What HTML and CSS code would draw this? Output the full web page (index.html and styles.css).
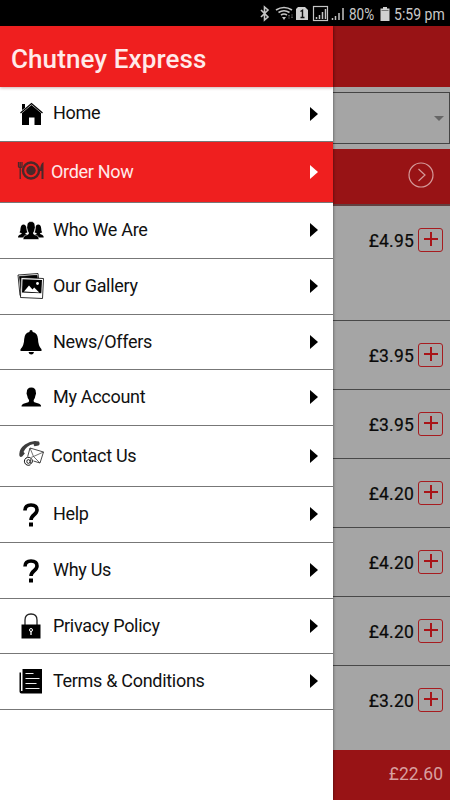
FILE: index.html
```html
<!DOCTYPE html>
<html lang="en">
<head>
<meta charset="utf-8">
<title>Chutney Express</title>
<link rel="stylesheet" href="styles.css">
</head>
<body>
<div class="statusbar">
  <svg class="status-icons" width="96" height="26" viewBox="0 0 96 26" fill="none" stroke="#c4c4c4">
    <path d="M2 10l7 7-3.500 3V7L9 10l-7 7" stroke-width="1.600"/>
    <path d="M17 10q8-5 16 0M19.500 12.500q5.500-3.500 11 0M22 15q3-2 6 0" stroke-width="1.700"/>
    <path d="M23 17h4l-2 3z" fill="#c4c4c4" stroke="none"/>
    <path d="M30 19v-4m-1 1l1-1 1 1M33 14v4m-1-1l1 1 1-1" stroke="#555" stroke-width=".8"/>
    <path d="M39 7h7l3 3v10H37V9z" fill="#d0d0d0" stroke="none"/>
    <path d="M41.500 11.500l2-1.300V17.500M41.500 17.500h4" stroke="#111" stroke-width="1.400"/>
    <rect x="54.500" y="6.500" width="14" height="14" stroke-width="1.200"/>
    <path d="M57.500 19v-2M60.500 19v-4M63.500 19v-7M66.500 19V9" stroke-width="1.500"/>
    <path d="M73.500 20v-2M76.500 20v-4M80 20v-7M84 20V8" stroke-width="1.500"/>
  </svg>
  <span class="battery-level">80%</span>
  <svg class="battery" width="10" height="14" viewBox="0 0 10 14"><path d="M3 0h4v1.500h2.500V14H.5V1.500H3z" fill="#d0d0d0"/><path d="M1.500 3.500h7" stroke="#777"/></svg>
  <span class="clock">5:59 pm</span>
</div>
<div class="screen">
  <nav class="drawer">
    <h1 class="drawer-title">Chutney Express</h1>
    <ul class="menu">
      <li class="item first"><svg class="icon" viewBox="0 0 28 28"><path d="M5 4h3v4l-3 2z"/><path d="M3.500 13L14.500 3.500 25.500 13" fill="none" stroke="#000" stroke-width="1.300"/><path d="M5 13l9.500-8 9.500 8v12h-6.500v-7.500h-5.500V25H5z"/></svg><span>Home</span><i class="arrow"></i></li>
      <li class="item active wide"><svg class="icon" viewBox="0 0 28 28"><g fill="#49282a" stroke="#49282a"><circle cx="14" cy="12.500" r="8" fill="none" stroke-width="2.400"/><circle cx="14" cy="12.500" r="4.700" stroke="none"/><path d="M1.500 4v4.500q0 1 1.700 1T5 8.500V4M3.200 4v17" fill="none" stroke-width="1.300"/><path d="M26.500 4q-3.500 2-3.500 9h1.500v8h2z" stroke="none"/></g></svg><span>Order Now</span><i class="arrow"></i></li>
      <li class="item"><svg class="icon" viewBox="0 0 28 28"><path d="M1 21.500q0-2.500 3-3.200 1-.3.500-1.200-1.500 0-2-.8 1-1 1-3.800Q4 8.500 6.500 8.500T9.500 12.500q0 2.800 1 3.800-.5.800-2 .8-.5.900.5 1.200 3 .7 3 3.200z"/><path d="M16 21.500q0-2.500 3-3.200 1-.3.500-1.200-1.500 0-2-.8 1-1 1-3.800 0-4 2.700-4t3 4q0 2.800 1 3.800-.5.800-2 .8-.5.900.5 1.200 3 .7 3 3.200z"/><path d="M6 23.500q0-4 4.300-4.800 1.700-.3 1.200-2.200-1-1-1.200-3-1-2.500-.3-3.500 0-4.500 4-4.500t4 4.500q.7 1-.3 3.500-.2 2-1.200 3-.5 1.900 1.200 2.200 4.300.8 4.300 4.800z" stroke="#fff" stroke-width=".6"/></svg><span>Who We Are</span><i class="arrow"></i></li>
      <li class="item"><svg class="icon" viewBox="0 0 28 28"><g fill="#fff" stroke="#000" stroke-width=".8"><path d="M1 3l20-1.500 2 20-20 2z"/><path d="M2.500 4.500l17.500-1.200 1 12-17 1.500z" fill="#000"/><path d="M4 5.500l22.500 1-1 20-22-1z"/></g><path d="M5.500 7.200l19.500.8-.7 13.200L5 20.500z"/><path d="M7 19.500l5-6 3.500 4 1.700-2 5 5z" fill="#fff"/><circle cx="20.500" cy="11.500" r="1.400" fill="#fff"/></svg><span>Our Gallery</span><i class="arrow"></i></li>
      <li class="item short"><svg class="icon" viewBox="0 0 28 28"><path d="M14 2q1.700 0 1.700 1.900 5 1 5.300 7.100.2 7 3.500 10.300V23H3.500v-1.700Q7 18 7.200 11q.3-6.100 5.200-7.100Q12.400 2 14 2zM11.500 24h5.500q-.5 2.500-2.700 2.500T11.500 24z"/></svg><span>News/Offers</span><i class="arrow"></i></li>
      <li class="item"><svg class="icon" viewBox="0 0 28 28"><path d="M4.500 23.500q0-2.600 3.500-3.300l3.300-1q1.200-.6.700-2.200-1.500-1.700-1.700-4-1.300-3-.5-4Q9.800 4.500 14.300 4.500t4.500 4.500q.8 1-.5 4-.2 2.300-1.600 4-.5 1.600.7 2.200l3.300 1q3.400.7 3.400 3.300z"/></svg><span>My Account</span><i class="arrow"></i></li>
      <li class="item wide"><svg class="icon contact" viewBox="0 0 28 28"><path d="M2.500 16Q1.200 9.500 8 4.500T22 1.500q1.500 3-.5 4l-4 .8q-1-1-.8-2.300-3.700.7-6.500 3t-3.700 5q1 .7 1.300 1.600l-2.600 3q-1.700 1-2.700-.6z" fill="#3d3d3d"/><g fill="#fff" stroke="#333"><path d="M13 8l13.500 4L23 23l-13-4z" stroke-width=".9"/><path d="M13 8l3.500 8.500L26.500 12M10 19l6.500-2.500L23 23" fill="none" stroke-width=".7"/><circle cx="11.500" cy="21.500" r="4.500" stroke="#fff"/><path d="M13.500 24.700A4 4 0 1 1 15.400 21q0 2.400-1.400 2.400t-1-1.700l.4-2.300" fill="none" stroke="#111" stroke-width="1"/><ellipse cx="11.400" cy="21.500" rx="1.600" ry="1.900" stroke="#111" stroke-width=".9"/></g></svg><span>Contact Us</span><i class="arrow"></i></li>
      <li class="item"><svg class="icon" viewBox="0 0 28 28"><path d="M8 10.500Q8 5 14 5t6 5c0 5-6 4.500-6 10" fill="none" stroke="#000" stroke-width="3.600"/><path d="M12 22.500h4v4h-4z"/></svg><span>Help</span><i class="arrow"></i></li>
      <li class="item"><svg class="icon" viewBox="0 0 28 28"><path d="M8 10.500Q8 5 14 5t6 5c0 5-6 4.500-6 10" fill="none" stroke="#000" stroke-width="3.600"/><path d="M12 22.500h4v4h-4z"/></svg><span>Why Us</span><i class="arrow"></i></li>
      <li class="item short"><svg class="icon" viewBox="0 0 28 28"><path d="M8 13V8q0-6 6-6t6 6v5" fill="none" stroke="#222" stroke-width="1.300"/><path d="M4.500 12.500h19v14h-19z"/><path d="M14 19v4" stroke="#fff" stroke-width="1.300"/><circle cx="14" cy="18" r="1.500" fill="none" stroke="#fff"/></svg><span>Privacy Policy</span><i class="arrow"></i></li>
      <li class="item"><svg class="icon" viewBox="0 0 28 28"><path d="M5.500 2H25v24.500H4.500q-2 0-2-2V5.500H4V24h1.500z"/><path d="M8.500 6.500h8M8.500 11.500h14M8.500 16.500h11M8.500 21.500h14" stroke="#eee" stroke-width="1.200"/></svg><span>Terms &amp; Conditions</span><i class="arrow"></i></li>
    </ul>
  </nav>
  <main class="page">
    <div class="appbar"></div>
    <div class="filter"><div class="select"><i class="caret"></i></div></div>
    <div class="category"><svg width="26" height="26" viewBox="0 0 26 26" fill="none" stroke="#d59a9a" stroke-width="1.200"><circle cx="13" cy="13" r="12"/><path d="M10.500 7l6.500 6-6.500 6"/></svg></div>
    <div class="dish tall"><span>£4.95</span><b class="add"></b></div>
    <div class="dish"><span>£3.95</span><b class="add"></b></div>
    <div class="dish"><span>£3.95</span><b class="add"></b></div>
    <div class="dish"><span>£4.20</span><b class="add"></b></div>
    <div class="dish"><span>£4.20</span><b class="add"></b></div>
    <div class="dish"><span>£4.20</span><b class="add"></b></div>
    <div class="dish last"><span>£3.20</span><b class="add"></b></div>
    <div class="total">£22.60</div>
  </main>
</div>
</body>
</html>
```
FILE: styles.css
```css
* { box-sizing: border-box; }
body { margin: 0; width: 450px; height: 800px; overflow: hidden; font-family: Roboto, sans-serif; background: #000; }
.statusbar { height: 26px; display: flex; align-items: center; padding-left: 259px; color: #c8c8c8; font-size: 16.500px; line-height: 26px; white-space: nowrap; }
.status-icons { flex: none; margin-right: -6px; }
.battery-level { width: 27px; transform: scaleX(.82); transform-origin: left; padding-top: 3px; }
.battery { flex: none; margin: 1px 4px 0 4px; }
.clock { padding-top: 3px; transform: scaleX(.85); transform-origin: left; }
.screen { display: flex; height: 774px; }
.drawer { width: 333px; flex: none; background: #fff; z-index: 1; box-shadow: 0 0 3px rgba(0,0,0,.55); }
.drawer-title { margin: 0; height: 61px; padding: 3px 0 0 11px; background: #ef1f1f; color: #ffeaea; font-size: 26px; letter-spacing: .1px; line-height: 61px; font-weight: 500; box-shadow: 0 1px 3px rgba(80,0,0,.3); }
.menu { list-style: none; margin: 0; padding: 0; }
.item { height: 56px; display: flex; align-items: center; padding: 0 15px 1px 17px; border-bottom: 1px solid #777; color: #111; font-size: 18px; letter-spacing: -.3px; }
.first, .short { height: 55px; }
.wide { height: 61px; }
.icon { width: 28px; height: 28px; flex: none; margin-right: 8px; }
.wide .icon { margin-right: 6px; }
.wide .contact { margin-top: -3px; }
.item span { flex: 1; padding-bottom: 2px; }
.short span { padding-bottom: 0; }
.active span { padding-bottom: 0; }
.wide .contact + span { padding-bottom: 0; }
.active { background: #ef1f1f; color: #ffeaea; }
.arrow { border-left: 8px solid #000; border-top: 7.500px solid transparent; border-bottom: 7.500px solid transparent; }
.active .arrow { border-left-color: #fff; }
.page { flex: 1; background: #a5a5a5; }
.appbar { height: 61px; background: #981315; }
.filter { height: 62px; padding: 5px 0; }
.select { height: 52px; border: 1px solid #444; border-left: 0; display: flex; align-items: center; justify-content: flex-end; padding-right: 5px; }
.caret { border-top: 5px solid #666; border-left: 5px solid transparent; border-right: 5px solid transparent; }
.category { height: 57px; background: #981315; border-bottom: 2px solid #634040; display: flex; align-items: center; justify-content: flex-end; padding: 0 16px 3px 0; }
.dish { height: 69px; border-bottom: 1px solid #484848; display: flex; align-items: center; justify-content: flex-end; padding-right: 7px; color: #0a0a0a; font-size: 17.500px; letter-spacing: .2px; }
.dish span { margin-right: 4px; padding-top: 2px; -webkit-text-stroke: .2px; }
.tall { height: 115px; padding-bottom: 46px; }
.last { height: 84px; border: 0; padding-bottom: 16px; }
.add { width: 25px; height: 24px; border: 1px solid #a71c20; border-radius: 3px; background: linear-gradient(#a91418,#a91418) center 9px / 14px 2px no-repeat, linear-gradient(#a91418,#a91418) 11px 3px / 2px 14px no-repeat; }
.total { height: 50px; background: #981315; color: #d8a0a0; font-size: 17.500px; line-height: 48px; text-align: right; padding-right: 7px; }
```
